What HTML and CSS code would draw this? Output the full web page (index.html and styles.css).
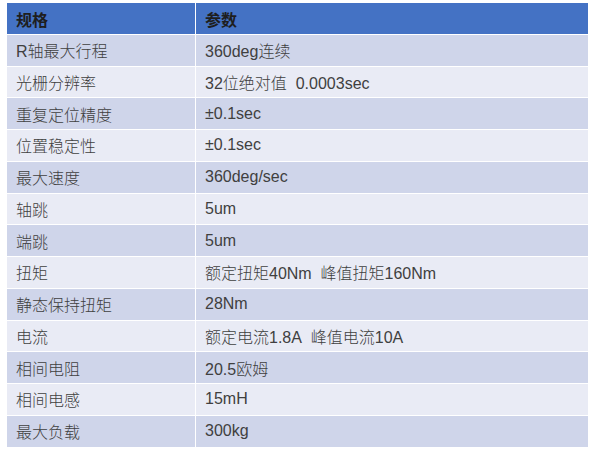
FILE: index.html
```html
<!DOCTYPE html>
<html lang="zh-CN">
<head>
<meta charset="utf-8">
<title>规格参数</title>
<link rel="stylesheet" href="styles.css">
</head>
<body>
<div class="spec">
  <div class="cell head">规格</div><div class="cell head">参数</div>
  <div class="cell dark">R轴最大行程</div><div class="cell dark">360deg连续</div>
  <div class="cell light">光栅分辨率</div><div class="cell light">32位绝对值&nbsp;&nbsp;0.0003sec</div>
  <div class="cell dark">重复定位精度</div><div class="cell dark">±0.1sec</div>
  <div class="cell light">位置稳定性</div><div class="cell light">±0.1sec</div>
  <div class="cell dark">最大速度</div><div class="cell dark">360deg/sec</div>
  <div class="cell light">轴跳</div><div class="cell light">5um</div>
  <div class="cell dark">端跳</div><div class="cell dark">5um</div>
  <div class="cell light">扭矩</div><div class="cell light">额定扭矩40Nm&nbsp;&nbsp;峰值扭矩160Nm</div>
  <div class="cell dark">静态保持扭矩</div><div class="cell dark">28Nm</div>
  <div class="cell light">电流</div><div class="cell light">额定电流1.8A&nbsp;&nbsp;峰值电流10A</div>
  <div class="cell dark">相间电阻</div><div class="cell dark">20.5欧姆</div>
  <div class="cell light">相间电感</div><div class="cell light">15mH</div>
  <div class="cell dark">最大负载</div><div class="cell dark">300kg</div>
</div>
</body>
</html>
```
FILE: styles.css
```css
html, body {
  margin: 0;
  padding: 0;
  background: #ffffff;
}
body {
  padding: 3px 0 0 7px;
  font-family: "Liberation Sans", "Noto Sans CJK SC", sans-serif;
  font-size: 16px;
  color: #404040;
}
.spec {
  display: grid;
  grid-template-columns: 188px 392px;
  grid-auto-rows: 30.75px;
  column-gap: 1px;
  row-gap: 1px;
  width: 581px;
}
.cell {
  display: flex;
  align-items: center;
  padding-left: 9px;
  white-space: nowrap;
}
.dark, .light {
  font-weight: 300;
}
.head {
  background: #4472c4;
  color: #1e1e1e;
  font-weight: bold;
  height: 31px;
  margin-bottom: 2px;
}
.dark {
  background: #cfd5ea;
}
.light {
  background: #e9ebf5;
}
```
